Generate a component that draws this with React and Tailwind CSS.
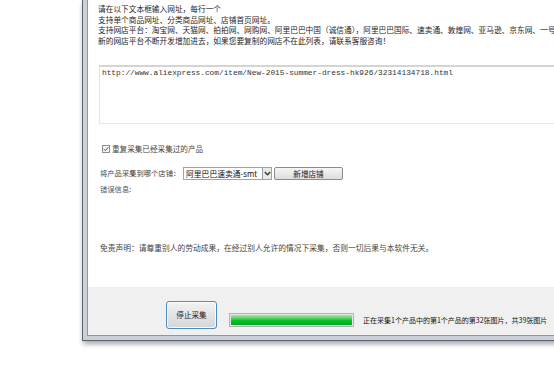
export default function App() {
  const cjk = "font-['Noto_Sans_CJK_SC','Noto_Sans',sans-serif]"

  return (
    <div className={`w-[554px] h-[391px] bg-white overflow-hidden ${cjk}`}>
      <div className="ml-[82px] w-[490px] border-l border-b border-[#5a646e] shadow-[1px_3px_5px_rgba(0,0,0,0.35)]">
        <div className="border-l-4 border-b-4 border-[#c9d1d9]">
          <div className="border-l border-b border-[#8d97a1]">
            {/* main white area */}
            <div className="h-[287px] bg-white pl-[10px] pt-[4px] text-[#1e1e1e]">
              <div className="text-[7.7px] leading-[10.7px] whitespace-nowrap">
                <p>请在以下文本框输入网址，每行一个</p>
                <p>支持单个商品网址、分类商品网址、店铺首页网址。</p>
                <p>支持网店平台：淘宝网、天猫网、拍拍网、网购网、阿里巴巴中国（诚信通），阿里巴巴国际、速卖通、敦煌网、亚马逊、京东网、一号店</p>
                <p>新的网店平台不断开发增加进去，如果您要复制的网店不在此列表，请联系客服咨询！</p>
              </div>

              <div className="mt-[18px] ml-[1px] h-[59px] border-t-2 border-l border-b border-t-[#d4d4d4] border-l-[#e4e4e4] border-b-[#e8e8e8] bg-white pl-[2px] pt-[1px]">
                <p className="font-['Liberation_Mono',monospace] text-[7.8px] leading-[10px] text-[#333] whitespace-nowrap">
                  http://www.aliexpress.com/item/New-2015-summer-dress-hk926/32314134718.html
                </p>
              </div>

              <div className="mt-[20px] ml-[4px] flex items-center gap-[2px] text-[7.6px] leading-[10px] text-[#444]">
                <span className="flex h-[8px] w-[8px] items-center justify-center border border-[#8e8f8f] bg-[#f4f4f4]">
                  <svg width="6" height="6" viewBox="0 0 6 6">
                    <path d="M0.8 3.1 L2.4 4.7 L5.3 1.2" fill="none" stroke="#4a5a6a" strokeWidth="1" />
                  </svg>
                </span>
                <span>重复采集已经采集过的产品</span>
              </div>

              <div className="mt-[13px] ml-[2px] flex items-center text-[7.3px] leading-[13px] text-[#444]">
                <span className="w-[83px]">将产品采集到哪个店铺：</span>
                <div className="flex h-[13px] items-stretch border border-[#a3a3a3] bg-white">
                  <span className="w-[78px] overflow-hidden whitespace-nowrap pl-[2px] text-[7.8px] leading-[11px] text-[#111]">阿里巴巴速卖通-smt</span>
                  <span className="flex w-[9px] items-center justify-center border-l border-[#9a9a9a] bg-[#eaeaea]">
                    <svg width="7" height="5" viewBox="0 0 7 5">
                      <path d="M0.8 1 L3.5 3.8 L6.2 1" fill="none" stroke="#333" strokeWidth="1.3" />
                    </svg>
                  </span>
                </div>
                <div className="ml-[2px] flex h-[13px] w-[69px] items-center justify-center rounded-[2px] border border-[#8c8c8c] bg-gradient-to-b from-[#f6f6f6] to-[#dcdcdc] text-[7.6px] text-[#222]">
                  新增店铺
                </div>
              </div>

              <p className="mt-[4px] ml-[2px] text-[7.3px] leading-[10px] text-[#555]">错误信息:</p>

              <p className="mt-[49px] ml-[2px] text-[7.75px] leading-[10px] text-[#444] whitespace-nowrap">
                免责声明：请尊重别人的劳动成果，在经过别人允许的情况下采集，否则一切后果与本软件无关。
              </p>
            </div>

            {/* bottom panel */}
            <div className="h-[48px] bg-[#f0f0f0] pl-[78px] pt-[14px] flex items-start">
              <div className="flex h-[28px] w-[51px] items-center justify-center rounded-[3px] border border-[#4a8cc0] bg-gradient-to-b from-[#f2f2f2] to-[#d4d6d8] text-[7.6px] text-[#222] shadow-[inset_0_0_0_1px_rgba(255,255,255,0.8)]">
                停止采集
              </div>
              <div className="ml-[12px] mt-[12px] h-[14px] w-[125px] border border-[#b2b2b2] bg-[#e6e6e6] p-[1px]">
                <div className="h-full w-full bg-gradient-to-b from-[#9fe7a8] via-[#06c52b] to-[#07a625]" />
              </div>
              <span className="ml-[9px] mt-[14px] text-[7px] leading-[10px] text-[#111] whitespace-nowrap">
                正在采集1个产品中的第1个产品的第32张图片，共39张图片
              </span>
            </div>
          </div>
        </div>
      </div>
    </div>
  )
}
